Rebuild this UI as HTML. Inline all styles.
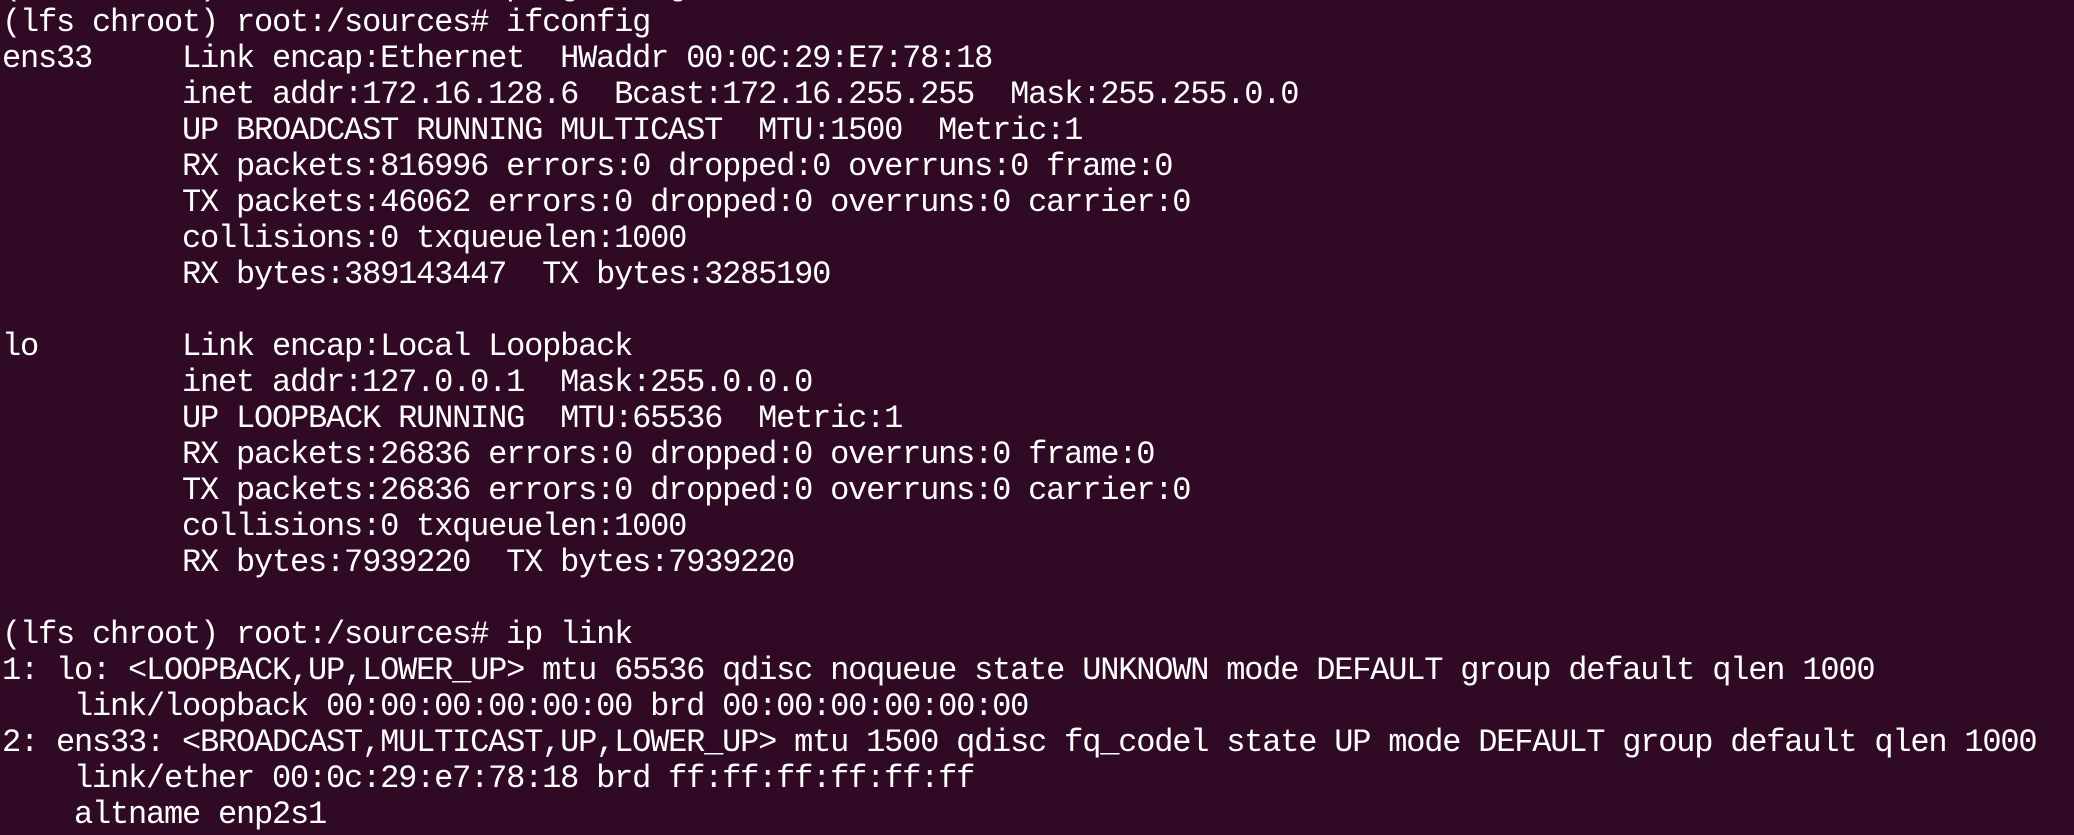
<!DOCTYPE html>
<html><head><meta charset="utf-8"><style>
html,body{margin:0;padding:0;background:#300a24;width:2074px;height:835px;overflow:hidden}
pre{margin:0;position:absolute;left:2px;top:-31px;font-family:"Liberation Mono","DejaVu Sans Mono",monospace;font-size:32px;letter-spacing:-1.2px;line-height:36px;color:#ffffff;white-space:pre}
</style></head><body>
<pre>(lfs chroot) root:/sources# ping -c1 g
(lfs chroot) root:/sources# ifconfig
ens33     Link encap:Ethernet  HWaddr 00:0C:29:E7:78:18
          inet addr:172.16.128.6  Bcast:172.16.255.255  Mask:255.255.0.0
          UP BROADCAST RUNNING MULTICAST  MTU:1500  Metric:1
          RX packets:816996 errors:0 dropped:0 overruns:0 frame:0
          TX packets:46062 errors:0 dropped:0 overruns:0 carrier:0
          collisions:0 txqueuelen:1000
          RX bytes:389143447  TX bytes:3285190

lo        Link encap:Local Loopback
          inet addr:127.0.0.1  Mask:255.0.0.0
          UP LOOPBACK RUNNING  MTU:65536  Metric:1
          RX packets:26836 errors:0 dropped:0 overruns:0 frame:0
          TX packets:26836 errors:0 dropped:0 overruns:0 carrier:0
          collisions:0 txqueuelen:1000
          RX bytes:7939220  TX bytes:7939220

(lfs chroot) root:/sources# ip link
1: lo: &lt;LOOPBACK,UP,LOWER_UP&gt; mtu 65536 qdisc noqueue state UNKNOWN mode DEFAULT group default qlen 1000
    link/loopback 00:00:00:00:00:00 brd 00:00:00:00:00:00
2: ens33: &lt;BROADCAST,MULTICAST,UP,LOWER_UP&gt; mtu 1500 qdisc fq_codel state UP mode DEFAULT group default qlen 1000
    link/ether 00:0c:29:e7:78:18 brd ff:ff:ff:ff:ff:ff
    altname enp2s1</pre>
</body></html>
